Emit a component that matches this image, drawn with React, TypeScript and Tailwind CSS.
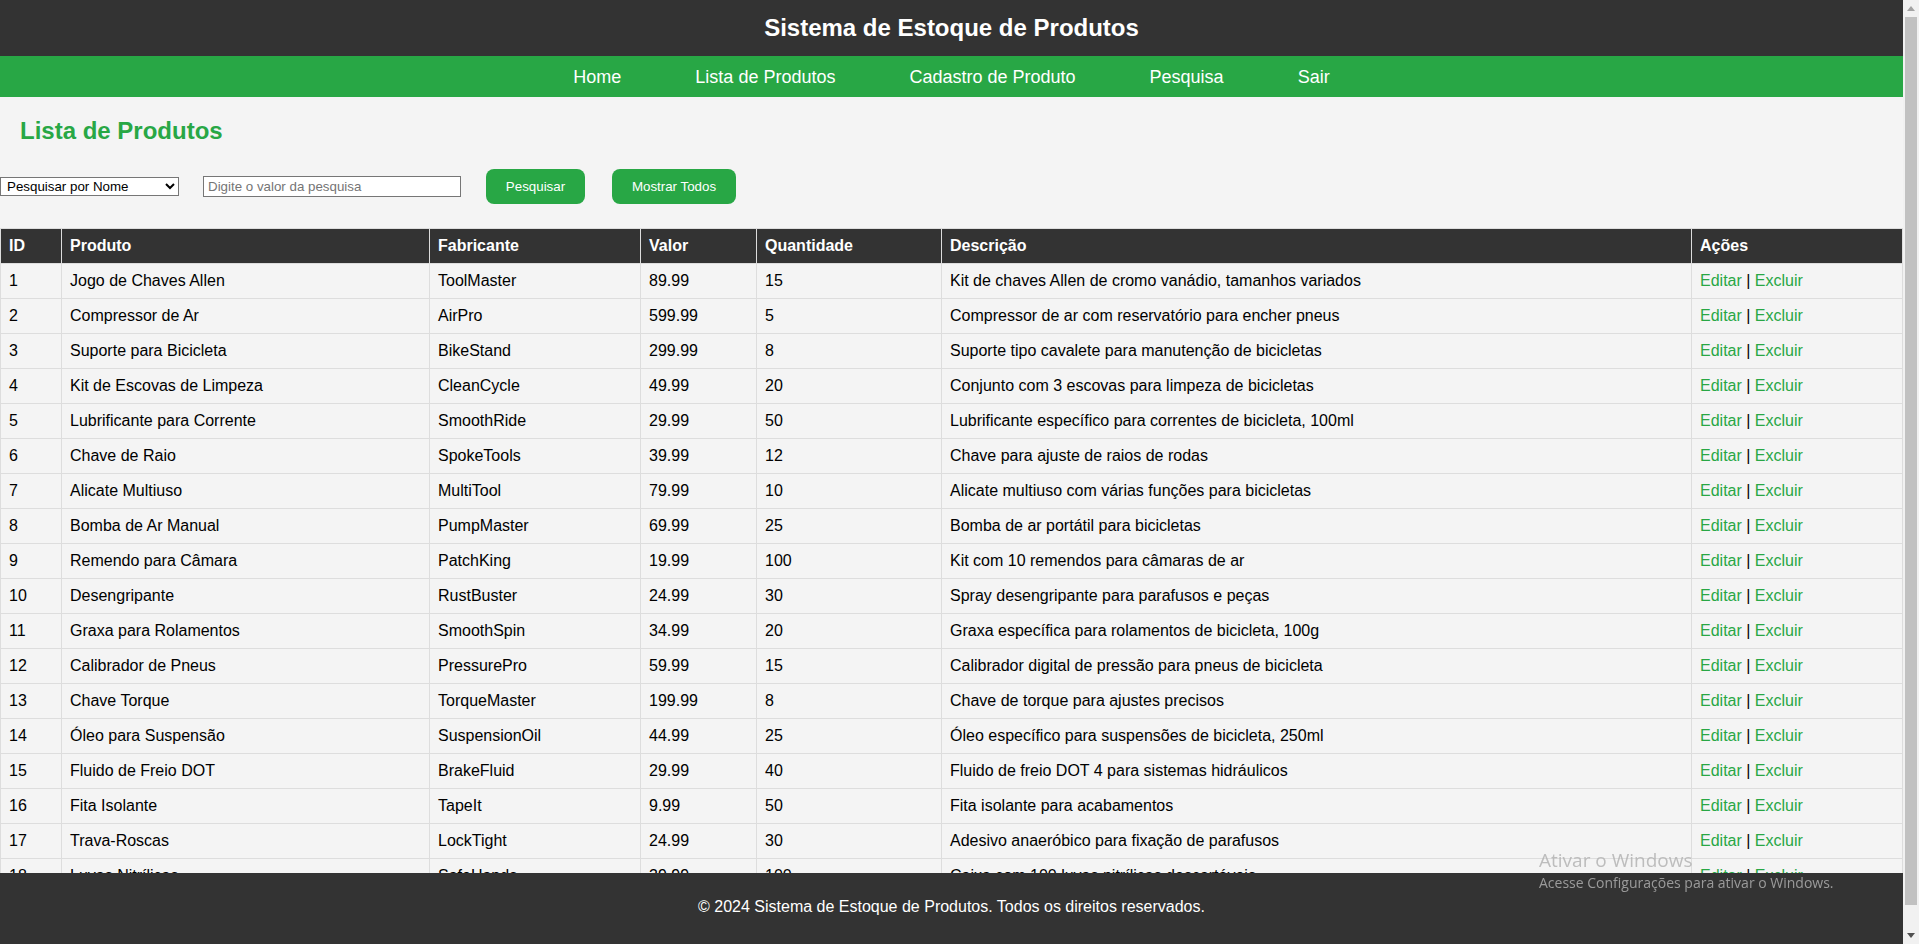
import React from "react";

type Produto = {
  id: number;
  nome: string;
  fabricante: string;
  valor: string;
  quantidade: number;
  descricao: string;
};

const produtos: Produto[] = [
  { id: 1, nome: "Jogo de Chaves Allen", fabricante: "ToolMaster", valor: "89.99", quantidade: 15, descricao: "Kit de chaves Allen de cromo vanádio, tamanhos variados" },
  { id: 2, nome: "Compressor de Ar", fabricante: "AirPro", valor: "599.99", quantidade: 5, descricao: "Compressor de ar com reservatório para encher pneus" },
  { id: 3, nome: "Suporte para Bicicleta", fabricante: "BikeStand", valor: "299.99", quantidade: 8, descricao: "Suporte tipo cavalete para manutenção de bicicletas" },
  { id: 4, nome: "Kit de Escovas de Limpeza", fabricante: "CleanCycle", valor: "49.99", quantidade: 20, descricao: "Conjunto com 3 escovas para limpeza de bicicletas" },
  { id: 5, nome: "Lubrificante para Corrente", fabricante: "SmoothRide", valor: "29.99", quantidade: 50, descricao: "Lubrificante específico para correntes de bicicleta, 100ml" },
  { id: 6, nome: "Chave de Raio", fabricante: "SpokeTools", valor: "39.99", quantidade: 12, descricao: "Chave para ajuste de raios de rodas" },
  { id: 7, nome: "Alicate Multiuso", fabricante: "MultiTool", valor: "79.99", quantidade: 10, descricao: "Alicate multiuso com várias funções para bicicletas" },
  { id: 8, nome: "Bomba de Ar Manual", fabricante: "PumpMaster", valor: "69.99", quantidade: 25, descricao: "Bomba de ar portátil para bicicletas" },
  { id: 9, nome: "Remendo para Câmara", fabricante: "PatchKing", valor: "19.99", quantidade: 100, descricao: "Kit com 10 remendos para câmaras de ar" },
  { id: 10, nome: "Desengripante", fabricante: "RustBuster", valor: "24.99", quantidade: 30, descricao: "Spray desengripante para parafusos e peças" },
  { id: 11, nome: "Graxa para Rolamentos", fabricante: "SmoothSpin", valor: "34.99", quantidade: 20, descricao: "Graxa específica para rolamentos de bicicleta, 100g" },
  { id: 12, nome: "Calibrador de Pneus", fabricante: "PressurePro", valor: "59.99", quantidade: 15, descricao: "Calibrador digital de pressão para pneus de bicicleta" },
  { id: 13, nome: "Chave Torque", fabricante: "TorqueMaster", valor: "199.99", quantidade: 8, descricao: "Chave de torque para ajustes precisos" },
  { id: 14, nome: "Óleo para Suspensão", fabricante: "SuspensionOil", valor: "44.99", quantidade: 25, descricao: "Óleo específico para suspensões de bicicleta, 250ml" },
  { id: 15, nome: "Fluido de Freio DOT", fabricante: "BrakeFluid", valor: "29.99", quantidade: 40, descricao: "Fluido de freio DOT 4 para sistemas hidráulicos" },
  { id: 16, nome: "Fita Isolante", fabricante: "TapeIt", valor: "9.99", quantidade: 50, descricao: "Fita isolante para acabamentos" },
  { id: 17, nome: "Trava-Roscas", fabricante: "LockTight", valor: "24.99", quantidade: 30, descricao: "Adesivo anaeróbico para fixação de parafusos" },
  { id: 18, nome: "Luvas Nitrílicas", fabricante: "SafeHands", valor: "39.99", quantidade: 100, descricao: "Caixa com 100 luvas nitrílicas descartáveis" },
  { id: 19, nome: "Corrente de Bicicleta", fabricante: "ChainPro", valor: "89.99", quantidade: 18, descricao: "Corrente de 9 velocidades com elo rápido" },
  { id: 20, nome: "Pastilhas de Freio", fabricante: "BrakeMaster", valor: "49.99", quantidade: 35, descricao: "Par de pastilhas para freio a disco" },
];

const navLinks = ["Home", "Lista de Produtos", "Cadastro de Produto", "Pesquisa", "Sair"];

const th = "border border-[#ddd] bg-[#333] px-2 py-2 text-left font-bold leading-[18px] text-white";
const td = "border border-[#ddd] px-2 py-2 leading-[18px]";

function Scrollbar() {
  return (
    <div className="flex h-full w-[16px] shrink-0 flex-col bg-[#f1f1f1]">
      <div className="flex h-[17px] items-center justify-center">
        <svg width="8" height="5" viewBox="0 0 8 5">
          <polygon points="4,0 8,5 0,5" fill="#a3a3a3" />
        </svg>
      </div>
      <div className="mx-[2px] h-[888px] bg-[#c1c1c1]" />
      <div className="flex-1" />
      <div className="flex h-[17px] items-center justify-center">
        <svg width="8" height="5" viewBox="0 0 8 5">
          <polygon points="0,0 8,0 4,5" fill="#505050" />
        </svg>
      </div>
    </div>
  );
}

export default function App() {
  return (
    <div className="flex h-screen overflow-hidden bg-[#f4f4f4] font-['Liberation_Sans',Arial,sans-serif] text-[16px] text-black">
      <main className="min-w-0 flex-1 overflow-hidden pb-[90px]">
        <header className="flex h-[56px] items-center justify-center bg-[#333]">
          <h1 className="text-[24px] font-bold leading-[28px] text-white">Sistema de Estoque de Produtos</h1>
        </header>
        <nav className="flex h-[41px] items-center justify-center bg-[#28a745]">
          {navLinks.map((l) => (
            <a key={l} href="#" className="px-[37px] text-[18px] leading-[20px] text-white">
              {l}
            </a>
          ))}
        </nav>

        <h2 className="ml-5 mt-[20px] text-[24px] font-bold leading-[28px] text-[#28a745]">Lista de Produtos</h2>

        <div className="mt-[24px] flex h-[35px] items-center text-[13.33px]">
          <select className="h-[19px] w-[179px] border border-[#767676] bg-white px-[2px] leading-[15px]">
            <option>Pesquisar por Nome</option>
            <option>Pesquisar por Fabricante</option>
          </select>
          <input
            type="text"
            placeholder="Digite o valor da pesquisa"
            className="ml-[24px] h-[21px] w-[258px] border border-[#767676] bg-white px-[4px] placeholder:text-[#757575]"
          />
          <button type="button" className="ml-[25px] h-[35px] w-[99px] rounded-[8px] bg-[#28a745] text-white">
            Pesquisar
          </button>
          <button type="button" className="ml-[27px] h-[35px] w-[124px] rounded-[8px] bg-[#28a745] text-white">
            Mostrar Todos
          </button>
        </div>

        <table className="mt-[24px] w-full table-fixed border-collapse">
          <thead>
            <tr>
              <th className={`${th} w-[61px]`}>ID</th>
              <th className={`${th} w-[368px]`}>Produto</th>
              <th className={`${th} w-[211px]`}>Fabricante</th>
              <th className={`${th} w-[116px]`}>Valor</th>
              <th className={`${th} w-[185px]`}>Quantidade</th>
              <th className={`${th} w-[750px]`}>Descrição</th>
              <th className={th}>Ações</th>
            </tr>
          </thead>
          <tbody>
            {produtos.map((p) => (
              <tr key={p.id}>
                <td className={td}>{p.id}</td>
                <td className={td}>{p.nome}</td>
                <td className={td}>{p.fabricante}</td>
                <td className={td}>{p.valor}</td>
                <td className={td}>{p.quantidade}</td>
                <td className={td}>{p.descricao}</td>
                <td className={td}>
                  <a href="#" className="text-[#28a745]">Editar</a> | <a href="#" className="text-[#28a745]">Excluir</a>
                </td>
              </tr>
            ))}
          </tbody>
        </table>

        <footer className="fixed bottom-0 left-0 right-[16px] flex h-[71px] items-center justify-center bg-[#333] pb-[3px] text-white">
          <p>© 2024 Sistema de Estoque de Produtos. Todos os direitos reservados.</p>
        </footer>
      </main>

      <Scrollbar />

      {/* windows activation watermark */}
      <div className="pointer-events-none fixed left-[1539px] top-[848px] font-['Open_Sans',sans-serif] text-[rgba(177,177,177,0.82)]">
        <div className="text-[19px] leading-[25px]">Ativar o Windows</div>
        <div className="text-[14px] leading-[19px]">Acesse Configurações para ativar o Windows.</div>
      </div>
    </div>
  );
}
